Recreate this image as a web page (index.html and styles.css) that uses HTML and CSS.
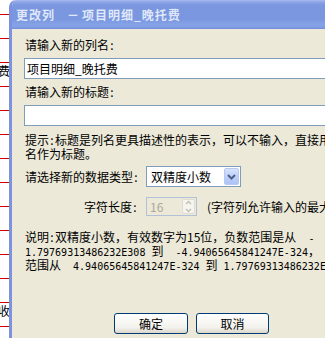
FILE: index.html
```html
<!DOCTYPE html>
<html lang="zh-CN">
<head>
<meta charset="UTF-8" />
<meta name="viewport" content="width=device-width, initial-scale=1" />
<title>更改列</title>
<link rel="stylesheet" href="styles.css">
</head>
<body>
<div class="behind">
  <div class="cell first"></div>
  <div class="cell"></div>
  <div class="cell"></div>
  <div class="cell"><span>费</span></div>
  <div class="cell"></div>
  <div class="cell"></div>
  <div class="cell"></div>
  <div class="cell"></div>
  <div class="cell"></div>
  <div class="cell"></div>
  <div class="cell"></div>
  <div class="cell"></div>
  <div class="cell"></div>
  <div class="cell"><span>收</span></div>
  <div class="cell"></div>
</div>

<div class="dialog">
  <div class="caption">更改列<span class="dash">－</span>项目明细_晚托费</div>
  <div class="content">
    <div class="label">请输入新的列名<span class="c">:</span></div>
    <div class="field">项目明细_晚托费</div>
    <div class="label">请输入新的标题<span class="c">:</span></div>
    <div class="field"></div>

    <p class="hint">提示<span class="c">:</span>标题是列名更具描述性的表示，可以不输入，直接用列<br>名作为标题。</p>

    <div class="line pick">
      <span class="key">请选择新的数据类型<span class="c">:</span></span>
      <div class="combo">
        <span class="combo-text">双精度小数</span>
        <span class="drop">
          <svg width="9" height="6" viewBox="0 0 9 6"><polyline points="1,1 4.5,4.5 8,1" fill="none" stroke="#4d6185" stroke-width="2"/></svg>
        </span>
      </div>
    </div>

    <div class="line size">
      <span class="key right">字符长度<span class="c">:</span></span>
      <div class="spin">
        <span class="spin-text">16</span>
        <span class="arrows">
          <svg width="11" height="15" viewBox="0 0 11 15">
            <polyline points="3,5 5.5,2.5 8,5" fill="none" stroke="#c3c1b6" stroke-width="1.5"/>
            <polyline points="3,10 5.5,12.5 8,10" fill="none" stroke="#c3c1b6" stroke-width="1.5"/>
          </svg>
        </span>
      </div>
      <span class="note">(字符列允许输入的最大长度)</span>
    </div>

    <p class="desc">说明<span class="c">:</span>双精度小数，有效数字为15位，负数范围是从<span class="m">  -</span><br><span class="m">1.79769313486232E308 </span>到<span class="m">  -4.94065645841247E-324</span>，<br>范围从<span class="m">  4.94065645841247E-324 </span>到<span class="m"> 1.79769313486232E308</span>。</p>

    <div class="buttons">
      <button class="btn ok">确定</button>
      <button class="btn">取消</button>
    </div>
  </div>
</div>
</body>
</html>
```

FILE: styles.css
```css
html, body {
  margin: 0;
  padding: 0;
}
body {
  width: 325px;
  height: 338px;
  overflow: hidden;
  background: #fff;
  display: flex;
  font-family: "Noto Sans CJK SC", sans-serif;
  font-size: 12px;
  color: #000;
}

/* sheet behind the dialog */
.behind {
  width: 9px;
  flex: none;
  overflow: hidden;
}
.cell {
  height: 23px;
  border-bottom: 1px solid #d00000;
  display: flex;
  justify-content: flex-end;
  align-items: flex-start;
  overflow: hidden;
  line-height: 14px;
  white-space: nowrap;
}
.cell.first {
  height: 14px;
}
.cell span {
  margin-top: 1px;
  margin-right: -1px;
}

/* dialog */
.dialog {
  flex: none;
  width: 430px;
  height: 338px;
  background: #ece9d8;
  border-left: 3px solid #7c92e0;
  border-top-left-radius: 7px;
  overflow: hidden;
}
.caption {
  height: 29px;
  line-height: 29px;
  padding-left: 4px;
  font-size: 12px;
  font-weight: bold;
  letter-spacing: 1px;
  color: #dfe7f9;
  white-space: nowrap;
  background: linear-gradient(180deg, #a9bcef 0, #8ea6e7 2px, #7b97e0 5px, #7a96df 19px, #86a2e7 25px, #7c98e1 28px, #6d88d6 29px);
}
.caption .dash {
  margin: 0 2px 0 12px;
}

.content {
  padding: 9px 0 0 12px;
  white-space: nowrap;
}
.c {
  display: inline-block;
  width: 6px;
  text-align: center;
}
.label {
  line-height: 14px;
  margin-left: 1px;
}
.field {
  box-sizing: border-box;
  width: 420px;
  height: 21px;
  margin: 6px 0;
  padding-left: 2px;
  border: 1px solid #7f9db9;
  background: #fff;
  line-height: 19px;
}

.hint {
  margin: 7px 0 0 1px;
  line-height: 14px;
}

.line {
  display: flex;
  align-items: center;
}
.key {
  width: 122px;
  flex: none;
  padding-left: 1px;
  box-sizing: border-box;
}
.key.right {
  text-align: right;
  padding-right: 8px;
}
.pick {
  margin-top: 5px;
  height: 21px;
}
.combo {
  box-sizing: border-box;
  width: 95px;
  height: 21px;
  border: 1px solid #7f9db9;
  background: #fff;
  display: flex;
  align-items: center;
  justify-content: space-between;
  padding: 1px;
}
.combo-text {
  padding-left: 3px;
}
.drop {
  box-sizing: border-box;
  width: 15px;
  height: 17px;
  border: 1px solid #b7c9f3;
  border-radius: 2px;
  background: linear-gradient(180deg, #d7e3fd, #b9cdf8 60%, #adc3f5);
  display: flex;
  align-items: center;
  justify-content: center;
}

.size {
  margin-top: 10px;
  height: 19px;
}
.spin {
  box-sizing: border-box;
  width: 51px;
  height: 19px;
  border: 1px solid #b3c1d8;
  display: flex;
  align-items: center;
  justify-content: space-between;
  padding: 1px;
  color: #aca899;
}
.spin-text {
  padding-left: 2px;
}
.arrows {
  box-sizing: border-box;
  width: 13px;
  height: 15px;
  border: 1px solid #dedcd3;
  border-radius: 2px;
  background: #f5f4ef;
  display: flex;
  align-items: center;
  justify-content: center;
}
.note {
  margin-left: 10px;
}

.desc {
  margin: 14px 0 0 1px;
  line-height: 14px;
}
.m {
  font-family: "DejaVu Sans Mono", monospace;
  font-size: 10px;
  line-height: 0;
  white-space: pre;
}

.buttons {
  margin: 41px 0 0 90px;
  display: flex;
  gap: 8px;
}
.btn {
  box-sizing: border-box;
  width: 73px;
  height: 21px;
  padding: 0;
  font-family: "Noto Sans CJK SC", sans-serif;
  font-size: 12px;
  color: #000;
  border: 1px solid #003c74;
  border-radius: 3px;
  background: linear-gradient(180deg, #ffffff, #f3f2ed 70%, #dcd7cb);
}
.btn.ok {
  width: 74px;
}
```
